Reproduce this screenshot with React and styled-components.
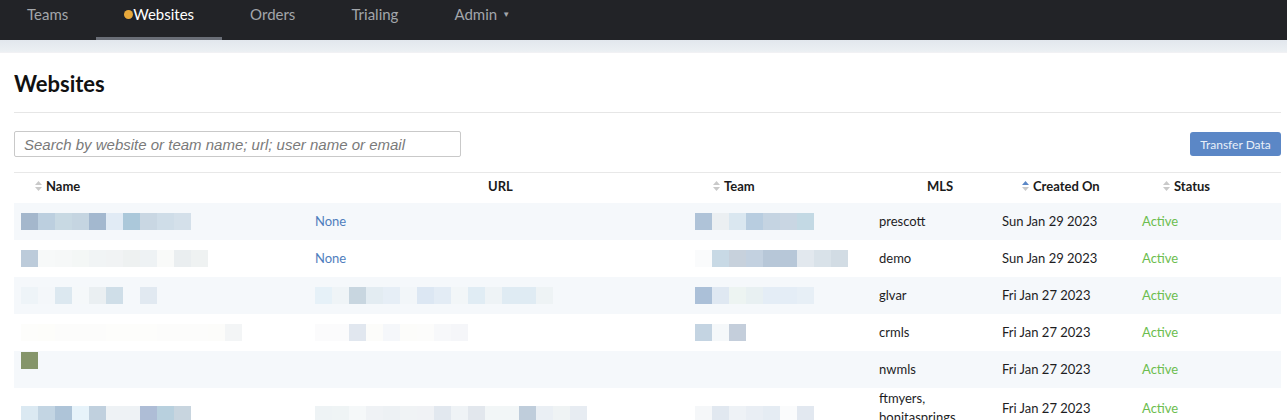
import React from 'react';
import styled, { createGlobalStyle } from 'styled-components';

const GlobalStyle = createGlobalStyle`
    body {
        margin: 0;
        background: #fff;
        font-family: Lato, "Open Sans", sans-serif;
        color: #1d1d1f;
    }
`;

const NavBar = styled.nav`
    display: flex;
    height: 40px;
    background-color: #222327;
`;

const NavItem = styled.div`
    box-sizing: border-box;
    height: 40px;
    padding: 0 28px;
    display: flex;
    align-items: flex-start;
    line-height: 28px;
    font-size: 15px;
    color: ${(p) => (p.$active ? '#ffffff' : '#a3a6ab')};
    border-bottom: 3px solid ${(p) => (p.$active ? '#6a6e77' : 'transparent')};

    &:first-child {
        padding-left: 27px;
    }
`;

const Dot = styled.span`
    width: 9px;
    height: 9px;
    margin-top: 10px;
    border-radius: 50%;
    background-color: #e7a83b;
`;

const Caret = styled.span`
    margin-left: 5px;
    font-size: 8px;
`;

const Band = styled.div`
    height: 12px;
    background-image: linear-gradient(180deg, #e2e7ed, #ecf0f3);
    border-bottom: 1px solid #f1f1f4;
`;

const Page = styled.main`
    padding: 0 6px 0 14px;
`;

const Title = styled.h1`
    margin: 17px 0 14px;
    font-size: 22px;
    line-height: 28px;
    font-weight: 700;
    color: #111;
`;

const Divider = styled.hr`
    margin: 0;
    border: 0;
    border-top: 1px solid #e6e6e6;
`;

const Toolbar = styled.div`
    display: flex;
    justify-content: space-between;
    align-items: center;
    margin: 18px 0 15px;
`;

const Search = styled.input`
    box-sizing: border-box;
    width: 447px;
    height: 26px;
    padding: 0 9px;
    border: 1px solid #c9c9c9;
    border-radius: 2px;
    font-family: "Liberation Sans", Arial, sans-serif;
    font-size: 15px;

    &::placeholder {
        color: #7a7a7a;
        font-style: italic;
    }
`;

const Button = styled.button`
    height: 24px;
    width: 91px;
    border: 0;
    border-radius: 3px;
    background-color: #5b87c6;
    color: #e9f0f9;
    font-family: Lato, sans-serif;
    font-size: 12px;
    padding: 0;
`;

const Table = styled.table`
    width: 100%;
    table-layout: fixed;
    border-collapse: collapse;
    border-top: 1px solid #e8e8e8;
    font-size: 13px;
`;

const Th = styled.th`
    height: 26px;
    padding: 0 0 4px ${(p) => p.$pad}px;
    text-align: left;
    font-weight: 700;
    color: #1b1b1b;
    white-space: nowrap;
`;

const HeadLabel = styled.span`
    display: inline-flex;
    align-items: center;
    gap: 4px;
`;

const Row = styled.tr`
    &:nth-child(odd) {
        background-color: #f5f8fb;
    }
`;

const Td = styled.td`
    height: 35px;
    padding: 1px 7px;
    line-height: 19px;
    vertical-align: middle;
    color: ${(p) => p.$color || '#1d1d1f'};
`;

const Mosaic = styled.div`
    display: flex;
    margin: ${(p) => p.$dy || 0}px 0 ${(p) => -(p.$dy || 0)}px;
`;

const Tile = styled.span`
    width: 17px;
    height: 17px;
    flex: none;
`;

const SortIcon = ({ active }) => (
    <svg width="7" height="10" viewBox="0 0 7 10">
        <path d="M0 4 L3.5 0 L7 4 Z" fill={active ? '#5b87c6' : '#c9c9c9'} />
        <path d="M0 6 L3.5 10 L7 6 Z" fill="#c9c9c9" />
    </svg>
);

const Blur = ({ colors, dy }) => (
    <Mosaic $dy={dy}>
        {colors.map((c, i) => (
            <Tile key={i} style={{ backgroundColor: c }} />
        ))}
    </Mosaic>
);

const columns = [
    { label: 'Name', width: 294, pad: 21, sort: true },
    { label: 'URL', width: 380, pad: 180 },
    { label: 'Team', width: 184, pad: 25, sort: true },
    { label: 'MLS', width: 123, pad: 55 },
    { label: 'Created On', width: 140, pad: 27, sort: true, active: true },
    { label: 'Status', width: 146, pad: 28, sort: true },
];

const rows = [
    {
        name: ['#a4b7cc', '#bccfdf', '#c8d9e3', '#c5d5e1', '#a3b8cf', '#e1ebf5', '#abc8da', '#c9d7e3', '#cfdde8', '#d4e0ea'],
        url: 'None',
        team: ['#afc3d8', '#ebeff2', '#dae7f0', '#b8cde0', '#c5d4e2', '#c9d6e3', '#c3d9e4'],
        mls: 'prescott',
        created: 'Sun Jan 29 2023',
    },
    {
        name: ['#bccbda', '#f7f9f9', '#f6f8f8', '#f4f7f6', '#f1f4f5', '#f1f3f4', '#eef1f1', '#eef2f4', '#f9faf9', '#eaeef0', '#eff2f2'],
        url: 'None',
        team: ['#fafbfc', '#c8d9e5', '#c7d1dc', '#c3d1e0', '#b7c7d8', '#b7c7d8', '#e2e8ee', '#d9e2e9', '#d2dce4'],
        mls: 'demo',
        created: 'Sun Jan 29 2023',
    },
    {
        name: ['#eef4f8', '#f4f7fa', '#dce8f0', '#f5f8fa', '#eaeff2', '#cfdee8', '#f5f8fb', '#e1e9f1'],
        url: ['#e6f1f8', '#eff4f7', '#c8d6e0', '#e3ecf2', '#e6eef6', '#f2f6f9', '#dce7f3', '#e3ecf5', '#f2f6f8', '#e0ecf4', '#eef3f6', '#dfebf3', '#dfebf3', '#eef3f5'],
        team: ['#abc0d8', '#dfe8f2', '#edf4f2', '#e8f0f2', '#e4edf6', '#e4edf6', '#e7eff6'],
        mls: 'glvar',
        created: 'Fri Jan 27 2023',
    },
    {
        name: ['#fdfdfb', '#fdfdfa', '#fcfcfb', '#fcfcfb', '#fcfcfb', '#fdfdfb', '#fdfdfb', '#fdfdfb', '#fcfcfb', '#fcfcfb', '#fcfcfb', '#fcfcfa', '#f3f5f6'],
        url: ['#fbfbfc', '#fbfbfc', '#e1e7ef', '#fcfcfa', '#f5f7fa', '#fcfcfa', '#fcfcfb', '#f7f8fa', '#f5f6f9'],
        team: ['#c4d4e2', '#f5f8fa', '#c4cedb'],
        mls: 'crmls',
        created: 'Fri Jan 27 2023',
    },
    {
        name: ['#85956a'],
        nameDy: -9,
        mls: 'nwmls',
        created: 'Fri Jan 27 2023',
    },
    {
        name: ['#dbe9f2', '#c3d5e3', '#aec4d8', '#e7f3fa', '#c0d0de', '#eef2f5', '#eef2f5', '#aebdd6', '#b8d0de', '#c8d5df'],
        url: ['#eef3f5', '#eff4f5', '#f5f8f9', '#eff2f5', '#edf1f4', '#f0f3f5', '#f0f2f5', '#e2e8ef', '#eff3f6', '#e2e7ed', '#f2f6f7', '#f2f6f7', '#bfcddb', '#eaeff4', '#eff3f4', '#e7ecf2'],
        team: ['#f5f7f9', '#e1e8f0', '#eef2f6', '#e9eef4', '#e5ecf3', '#fafbfc', '#e2e8f0'],
        mls: 'ftmyers, bonitasprings',
        created: 'Fri Jan 27 2023',
        dy: 6,
    },
];

const App = () => (
    <>
        <GlobalStyle />
        <NavBar>
            <NavItem>Teams</NavItem>
            <NavItem $active>
                <Dot />
                Websites
            </NavItem>
            <NavItem>Orders</NavItem>
            <NavItem>Trialing</NavItem>
            <NavItem>
                Admin<Caret>▼</Caret>
            </NavItem>
        </NavBar>
        <Band />
        <Page>
            <Title>Websites</Title>
            <Divider />
            <Toolbar>
                <Search placeholder="Search by website or team name; url; user name or email" />
                <Button>Transfer Data</Button>
            </Toolbar>
            <Table>
                <colgroup>
                    {columns.map((c) => (
                        <col key={c.label} style={{ width: c.width }} />
                    ))}
                </colgroup>
                <thead>
                    <tr>
                        {columns.map((c) => (
                            <Th key={c.label} $pad={c.pad}>
                                <HeadLabel>
                                    {c.sort && <SortIcon active={c.active} />}
                                    {c.label}
                                </HeadLabel>
                            </Th>
                        ))}
                    </tr>
                </thead>
                <tbody>
                    {rows.map((r, i) => (
                        <Row key={i}>
                            <Td>{r.name && <Blur colors={r.name} dy={r.nameDy ?? r.dy} />}</Td>
                            <Td $color="#4f7ebd">
                                {typeof r.url === 'string' ? r.url : r.url && <Blur colors={r.url} dy={r.dy} />}
                            </Td>
                            <Td>{r.team && <Blur colors={r.team} dy={r.dy} />}</Td>
                            <Td>{r.mls}</Td>
                            <Td>{r.created}</Td>
                            <Td $color="#6cbd4f">Active</Td>
                        </Row>
                    ))}
                </tbody>
            </Table>
        </Page>
    </>
);

export default App;
